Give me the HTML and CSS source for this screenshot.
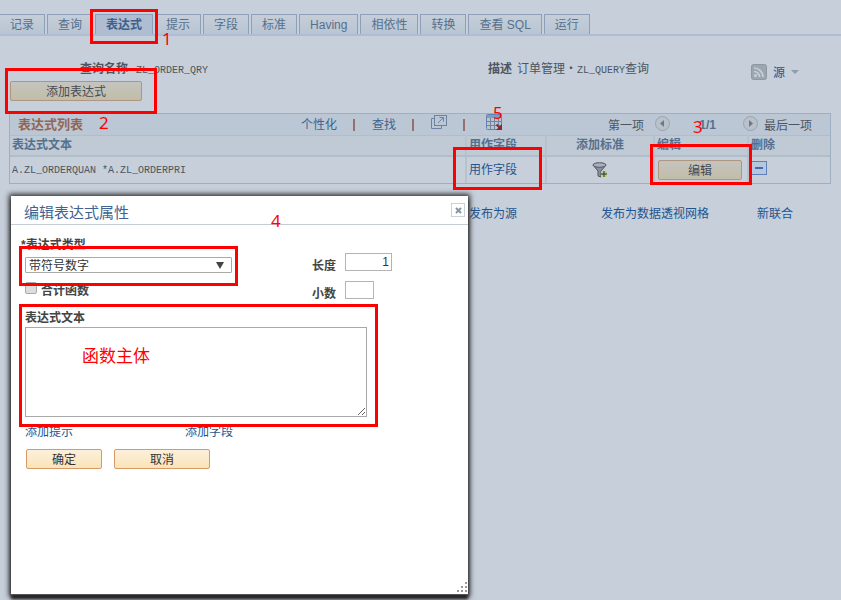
FILE: index.html
```html
<!DOCTYPE html>
<html lang="zh-CN">
<head>
<meta charset="utf-8">
<title>查询管理器</title>
<link rel="stylesheet" href="styles.css">
</head>
<body>
<main class="page">
  <nav class="tabs">
    <a class="tab" href="#">记录</a>
    <a class="tab" href="#">查询</a>
    <a class="tab active" href="#">表达式</a>
    <a class="tab" href="#">提示</a>
    <a class="tab" href="#">字段</a>
    <a class="tab" href="#">标准</a>
    <a class="tab" href="#">Having</a>
    <a class="tab" href="#">相依性</a>
    <a class="tab" href="#">转换</a>
    <a class="tab" href="#">查看 SQL</a>
    <a class="tab" href="#">运行</a>
  </nav>

  <header class="summary">
    <p class="name"><b>查询名称</b><span><code>ZL_ORDER_QRY</code></span></p>
    <p class="desc"><b>描述</b><span>订单管理・<code>ZL_QUERY</code>查询</span></p>
    <a class="feed" href="#">
      <svg width="16" height="16" viewBox="0 0 16 16"><rect x=".5" y=".5" width="15" height="15" rx="2" fill="#9ba6b1" stroke="#8d98a3"/><circle cx="4.5" cy="11.5" r="1.5" fill="#c6cfda"/><path d="M3 7.500a5.500 5.500 0 0 1 5.500 5.500M3 4a9 9 0 0 1 9 9" fill="none" stroke="#c6cfda" stroke-width="1.700"/></svg>
      <span>源</span>
      <svg width="8" height="4" viewBox="0 0 8 4"><path d="M0 0h8L4 4z" fill="#909caa"/></svg>
    </a>
  </header>
  <button class="btn add">添加表达式</button>

  <section class="grid">
    <div class="gridbar">
      <h2>表达式列表</h2>
      <div class="tools">
        <a href="#">个性化</a><i class="sep"></i><a href="#">查找</a><i class="sep"></i>
        <a class="icon" href="#" aria-label="弹出"><svg width="16" height="14" viewBox="0 0 16 14" fill="none" stroke="#6c829f"><path d="M3.500 3.500h-3v10h10v-3"/><rect x="3.500" y=".5" width="12" height="10"/><path d="M7 8l5-5M8.500 2.500h4v4"/></svg></a><i class="sep"></i>
        <a class="icon sheet" href="#" aria-label="下载"><svg width="17" height="16" viewBox="0 0 17 16"><rect x=".5" y=".5" width="15" height="15" rx="1" fill="#b9c4d1" stroke="#6582b0"/><path d="M1 1h14v3H1z" fill="#7e9bc8"/><path d="M1 7.500h14M1 11.500h14M4.500 4v11M8.500 4v11M12.500 4v11" stroke="#73859d"/><path d="M10.500 10.500l3 3" stroke="#8c2838" stroke-width="2"/><path d="M16 10v6h-6z" fill="#8c2838"/></svg></a>
      </div>
      <div class="pager">
        <span>第一项</span>
        <button class="round" aria-label="上一页"><svg width="15" height="15" viewBox="0 0 15 15"><circle cx="7.500" cy="7.500" r="7" fill="#b9c1cb" stroke="#99a4b1"/><path d="M9 4v7L5 7.500z" fill="#6e7987"/></svg></button>
        <b>1/1</b>
        <button class="round" aria-label="下一页"><svg width="15" height="15" viewBox="0 0 15 15"><circle cx="7.500" cy="7.500" r="7" fill="#b9c1cb" stroke="#99a4b1"/><path d="M6 4v7l4-3.500z" fill="#6e7987"/></svg></button>
        <span>最后一项</span>
      </div>
    </div>
    <table>
      <thead><tr><th class="c1">表达式文本</th><th class="c2">用作字段</th><th class="c3">添加标准</th><th class="c4">编辑</th><th>删除</th></tr></thead>
      <tbody><tr>
        <td><code>A.ZL_ORDERQUAN *A.ZL_ORDERPRI</code></td>
        <td><a href="#">用作字段</a></td>
        <td class="c3"><a href="#" aria-label="添加标准"><svg width="16" height="16" viewBox="0 0 16 16"><path d="M1 3l5 6v5l3 1V9l5-6z" fill="#89919a" stroke="#505963"/><ellipse cx="7.500" cy="3" rx="6.500" ry="2.300" fill="#a8afb7" stroke="#505963"/><path d="M9 9h6v6H9z" fill="#c0cc8c"/><path d="M12 9v6M9 12h6" stroke="#24302a"/></svg></a></td>
        <td><button class="btn edit">编辑</button></td>
        <td><button class="minus" aria-label="删除"></button></td>
      </tr></tbody>
    </table>
  </section>
  <nav class="links"><a href="#">发布为源</a><a href="#">发布为数据透视网格</a><a href="#">新联合</a></nav>
</main>

<section class="dialog" role="dialog" aria-labelledby="dlg">
  <header class="dlghead"><h1 id="dlg">编辑表达式属性</h1><button class="close" aria-label="关闭"><svg width="7" height="7" viewBox="0 0 7 7"><path d="M1 1l5 5M6 1L1 6" stroke="#8496a8" stroke-width="2"/></svg></button></header>
  <form class="form">
    <div class="fields">
      <div class="left">
        <label class="type" for="type">*表达式类型</label>
        <div class="pick"><select id="type"><option>带符号数字</option></select></div>
        <div class="check"><input id="agg" type="checkbox"><label for="agg">合计函数</label></div>
      </div>
      <div class="right">
        <label for="len">长度</label><input id="len" class="len" type="text" value="1">
        <label for="dec">小数</label><input id="dec" class="dec" type="text">
      </div>
    </div>
    <label class="textlabel" for="text">表达式文本</label>
    <textarea id="text"></textarea>
    <div class="addlinks"><a href="#">添加提示</a><a href="#">添加字段</a></div>
    <div class="actions"><button class="btn ok" type="button">确定</button><button class="btn cancel" type="button">取消</button></div>
  </form>
  <svg class="grip" width="10" height="10" viewBox="0 0 10 10" fill="#999"><path d="M8 0h2v2H8zM4 4h2v2H4zM8 4h2v2H8zM0 8h2v2H0zM4 8h2v2H4zM8 8h2v2H8z"/></svg>
</section>

<div class="mark m-tab"></div>
<div class="mark m-add"></div>
<div class="mark m-use"></div>
<div class="mark m-edit"></div>
<div class="mark m-type"></div>
<div class="mark m-text"></div>
<span class="note n1">1</span>
<span class="note n2">2</span>
<span class="note n3">3</span>
<span class="note n4">4</span>
<span class="note n5">5</span>
<span class="note n6">函数主体</span>
</body>
</html>
```
FILE: styles.css
```css
* { box-sizing: border-box; }
body {
  margin: 0;
  min-height: 100vh;
  position: relative;
  overflow: hidden;
  background: #c6cfda;
  color: #4d5560;
  font: 12px/18px "Liberation Sans", "Noto Sans CJK SC", sans-serif;
}
h1, h2, p { margin: 0; }
a { color: #1e5490; text-decoration: none; }
svg { display: block; }
button, input, select, textarea { font: inherit; color: #333; margin: 0; }
code { font: 10px/16px "Liberation Mono", monospace; }
.page { padding-top: 14px; }

.tabs { display: flex; gap: 2px; border-bottom: 2px solid #aebdd3; }
.tab {
  height: 20px;
  padding: 1px 10px 0;
  border: 1px solid #8e9fb9;
  border-bottom: 0;
  color: #55708f;
  background: linear-gradient(#c5ced9, #b9c5d2);
  white-space: nowrap;
}
.tab:first-child { border-left: 0; }
.tab.active { background: #aebdd2; font-weight: bold; color: #3f608b; }

.summary {
  display: grid;
  grid-template-columns: 80px 408px 263px 1fr;
  height: 44px;
  padding-top: 24px;
}
.summary p { display: flex; gap: 8px; white-space: nowrap; }
.name { grid-column: 2; }
.summary .desc { gap: 5px; }
.feed { display: flex; gap: 6px; height: 24px; align-items: center; }
.feed span { padding-top: 2px; }

.btn {
  border: 1px solid #d59a66;
  border-radius: 2px;
  background: linear-gradient(#fdf0da, #fae3b9);
  padding: 2px 0 0;
  height: 20px;
  line-height: 16px;
}
.page .btn { border-color: #ae9680; background: linear-gradient(#c4c4bf, #c2bda9); color: #444b55; }
.add { display: block; width: 132px; margin: 1px 0 0 10px; }

.grid { margin: 12px 10px 0 9px; border: 1px solid #9eafc3; }
.gridbar {
  display: grid;
  grid-template-columns: 291px 307px 1fr;
  height: 21px;
  align-items: center;
  background: #bbc7d4;
}
.gridbar h2 { font-size: 13px; line-height: 20px; color: #936653; padding-left: 8px; }
.tools { display: flex; align-items: center; }
.tools a { color: #3c6490; }
.tools .icon { margin-bottom: 6px; }
.sep { width: 2px; height: 12px; margin: 0 17px 0 16px; background: #95706f; }
.tools .sheet { margin-left: 4px; }
.pager { display: flex; align-items: center; white-space: nowrap; }
.pager span { padding-top: 2px; }
.round { border: 0; padding: 0; background: none; margin: 0 6px 4px 11px; }
.pager b { width: 56px; padding-right: 16px; text-align: right; color: #55708f; }

table { width: 100%; border-collapse: collapse; table-layout: fixed; }
th, td { text-align: left; padding: 0 2px; border-left: 2px solid #b6c2cf; }
th { height: 20px; line-height: 17px; padding-top: 1px; background: #bfcad5; color: #55708f; border-bottom: 2px solid #b1beca; border-top: 1px solid #b1beca; }
td { height: 27px; line-height: 16px; }
th:first-child, td:first-child { border-left: 0; }
.c1 { width: 456px; }
.c2 { width: 80px; }
.c3 { width: 108px; text-align: center; }
td.c3 svg { margin: 0 auto; }
.c4 { width: 94px; }
.edit { display: block; width: 84px; margin: 0 0 0 1px; }
.minus { display: grid; place-items: center; width: 16px; height: 14px; margin-bottom: 4px; border: 1px solid #5f7eb8; background: #b7c7df; padding: 0; }
.minus::before { content: ""; width: 8px; height: 2px; background: #446aab; }
.links { display: grid; grid-template-columns: 132px 156px 1fr; margin: 21px 0 0 469px; }

.dialog {
  position: absolute;
  left: 11px;
  top: 196px;
  width: 457px;
  height: 399px;
  background: #fff;
  border-bottom: 1px solid #555;
  box-shadow: 0 0 5px 2px #333, 0 4px 3px #111;
  color: #444;
}
.dlghead { display: flex; justify-content: space-between; height: 29px; padding: 7px 3px 0 13px; border-bottom: 1px solid #c5cdd5; }
.dlghead h1 { font-size: 15px; line-height: 20px; font-weight: normal; color: #426391; }
.close { width: 14px; height: 14px; display: grid; place-items: center; padding: 0; border: 1px solid #ccd2d8; background: #fff; }
.form { padding: 10px 14px; }
.fields { display: flex; }
.left { width: 275px; }
.left label, .right label, .textlabel { font-weight: bold; }
.type { display: block; margin: 1px 0 3px -4px; }
.pick { position: relative; width: 207px; }
.pick::after {
  content: "";
  position: absolute;
  right: 8px;
  top: 5px;
  border: 4px solid transparent;
  border-top: 7px solid #444;
  border-bottom: 0;
}
select { display: block; width: 100%; height: 16px; line-height: 16px; appearance: none; border: 1px solid #a9a9a9; border-radius: 1px; background: #fff; padding: 0 3px; }
.check { display: flex; gap: 4px; margin-top: 9px; }
.check input { appearance: none; width: 12px; height: 12px; border: 1px solid #aaa; border-radius: 2px; background: #ddd; }
.right { display: grid; grid-template-columns: 45px 47px; row-gap: 10px; padding-top: 18px; align-content: start; }
.right label { height: 18px; padding: 4px 0 0 12px; }
.right input { height: 18px; border: 1px solid #b4b4b4; padding: 0 2px; text-align: right; }
.len { width: 47px; }
.dec { width: 29px; }
.textlabel { display: block; margin-top: 9px; }
textarea { display: block; width: 342px; height: 90px; border: 1px solid #a9a9a9; background: #fff; resize: both; }
.addlinks { display: grid; grid-template-columns: 160px 1fr; margin-top: 6px; }
.actions { display: flex; gap: 12px; margin: 8px 0 0 1px; }
.ok { width: 76px; }
.cancel { width: 96px; }
.grip { position: absolute; right: 1px; bottom: 2px; }

.mark { position: absolute; border: 3px solid #f00; pointer-events: none; }
.m-tab { left: 90px; top: 9px; width: 68px; height: 35px; }
.m-add { left: 5px; top: 68px; width: 152px; height: 46px; }
.m-use { left: 453px; top: 147px; width: 89px; height: 43px; }
.m-edit { left: 650px; top: 144px; width: 102px; height: 41px; }
.m-type { left: 19px; top: 246px; width: 219px; height: 40px; }
.m-text { left: 19px; top: 304px; width: 359px; height: 123px; }
.note { position: absolute; color: #f00; font: 17px/20px "Noto Sans", "Noto Sans CJK SC", sans-serif; }
.n1 { left: 162px; top: 29px; }
.n2 { left: 99px; top: 113px; }
.n3 { left: 693px; top: 117px; }
.n4 { left: 271px; top: 211px; }
.n5 { left: 493px; top: 103px; }
.n6 { left: 82px; top: 346px; }
```
